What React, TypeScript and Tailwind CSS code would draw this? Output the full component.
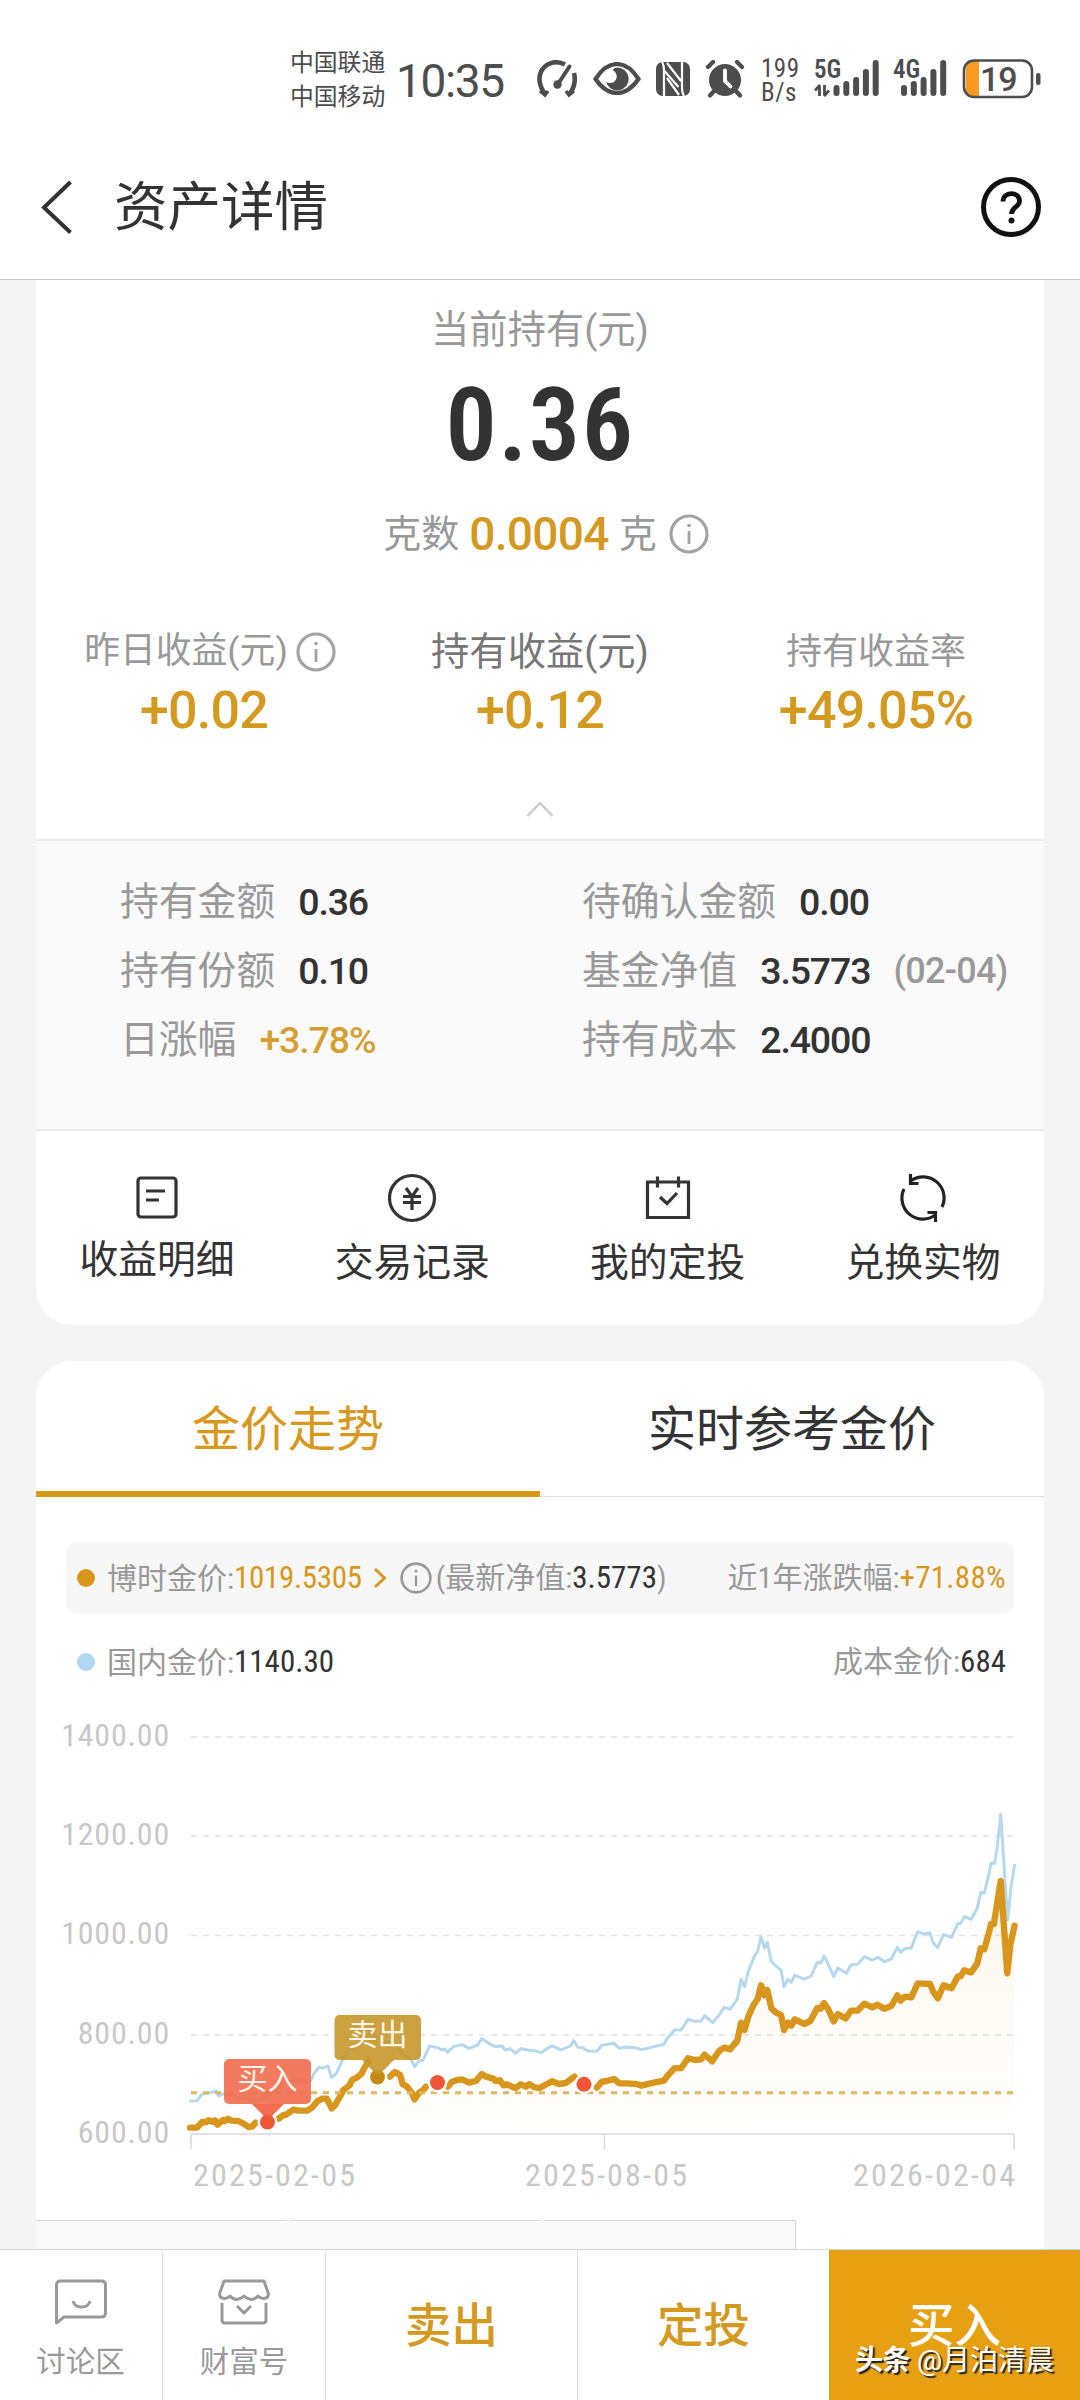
import type { ReactNode } from "react"

function InfoIcon({ className }: { className: string }) {
  return (
    <svg viewBox="0 0 40 40" className={className} fill="none" stroke="currentColor">
      <circle cx="20" cy="20" r="18" strokeWidth="3.200" />
      <path d="M20 17v13" strokeWidth="2.800" />
      <circle cx="20" cy="11.5" r="1.800" fill="currentColor" stroke="none" />
    </svg>
  )
}

const bars = [
  { y: 25, h: 11 },
  { y: 21, h: 15 },
  { y: 17, h: 19 },
  { y: 9, h: 27 },
  { y: 0, h: 36 },
]

function Signal({ label, offset, arrows }: { label: string; offset: number; arrows?: boolean }) {
  return (
    <div className="relative w-[65px] shrink-0 font-['Roboto_Condensed']">
      <div className="h-[20px] text-[25px] leading-[20px] font-semibold">{label}</div>
      <svg viewBox="0 0 65 38" className="absolute top-0 left-0 h-[38px] w-[65px]" fill="#4d4d4d">
        {arrows && (
          <path
            d="M5.500 25.500v10.500M6 25l-5 5.500M10.500 25v10.500M10 36l5-5.500"
            stroke="#4d4d4d"
            strokeWidth="2.800"
            fill="none"
          />
        )}
        {bars.map((b, i) => (
          <rect key={b.y} x={offset + i * 9.8} y={b.y} width="6" height={b.h} rx="3" />
        ))}
      </svg>
    </div>
  )
}

function StatusBar() {
  return (
    <div className="flex h-[148px] items-start pt-[45px] pl-[290px] text-[#4d4d4d]">
      <div className="w-[100px] pt-px text-[23.8px] leading-[34px]">
        <div>中国联通</div>
        <div>中国移动</div>
      </div>
      <div className="ml-[6px] w-[140px] pt-[8px] text-[46px] leading-[56px] tracking-[-0.03em]">10:35</div>
      <svg viewBox="0 0 42 38" className="mt-[15px] h-[38px] w-[42px]" fill="none" stroke="#4d4d4d" strokeWidth="4.600">
        <path d="M29 4.500C19-.5 8 3.500 4.500 13c-2.500 7-.5 13.500 4 20.500" />
        <path d="M38 13c1.800 7 .5 14-4 20.500" />
        <path d="M4 31l5 4 3-4M30 31l3 4 5-4" strokeWidth="3.500" />
        <path d="M33.500 6.500L22 24" strokeWidth="4" strokeLinecap="round" />
        <circle cx="21.500" cy="24.500" r="4.200" fill="#4d4d4d" stroke="none" />
      </svg>
      <svg viewBox="0 0 48 34" className="mt-[17px] ml-[15px] h-[34px] w-12">
        <path d="M2.500 17C9 7 16 2 24 2s15 5 21.500 15C39 26.500 32 31 24 31S9 26.500 2.500 17z" fill="none" stroke="#4d4d4d" strokeWidth="4.200" />
        <path d="M24 5.500a11.500 11.500 0 1 1-11 14c3 2.500 8 2 10-2 2-4-.5-8-3.500-9.500 1-1.600 2.500-2.500 4.500-2.500z" fill="#4d4d4d" />
      </svg>
      <svg viewBox="0 0 34 34" className="mt-[17px] ml-[15px] h-[34px] w-[34px]">
        <rect width="34" height="34" rx="6.500" fill="#4d4d4d" />
        <g fill="none" stroke="#fff" strokeWidth="2.200">
          <path d="M8 34V9q0-6-2-9M26 0v26q0 5 2 8" />
          <path d="M8.500 9l14 16M11 16l12 17M11 1l14 18" />
        </g>
      </svg>
      <svg viewBox="0 0 40 38" className="mt-[15px] ml-[15px] h-[38px] w-10" fill="none" stroke="#4d4d4d" strokeLinecap="round">
        <circle cx="20" cy="20" r="16" fill="#4d4d4d" stroke="none" />
        <path d="M3 7l5-5M37 7l-5-5M9 31l-4 4.500M31 31l4 4.500" strokeWidth="4.200" />
        <path d="M20 10.500v10.500l5.500 5.500" stroke="#fff" strokeWidth="3.800" />
      </svg>
      <div className="mt-[12px] ml-4 w-[53px] font-['Roboto_Condensed'] text-[25px] leading-[24px] tracking-[0.02em]">
        <div>199</div>
        <div>B/s</div>
      </div>
      <div className="mt-[15px] flex gap-[14px]">
        <Signal label="5G" offset={19.5} arrows />
        <Signal label="4G" offset={8} />
      </div>
      <svg viewBox="0 0 80 40" className="mt-[14px] ml-[4px] h-10 w-20">
        <path d="M4 10a8 8 0 0 1 8-8h5v36h-5a8 8 0 0 1-8-8z" fill="#fb9b20" />
        <rect x="2" y="1.500" width="68" height="36.500" rx="10" fill="none" stroke="#4d4d4d" strokeWidth="2.600" />
        <rect x="74" y="14" width="4.500" height="12" rx="2.200" fill="#4d4d4d" />
        <text x="18" y="32" fontSize="34" fontWeight="500" fontFamily="Roboto" letterSpacing="-1" fill="#4d4d4d">
          19
        </text>
      </svg>
    </div>
  )
}

function Header() {
  return (
    <div className="flex h-[132px] items-start border-b border-[#c8c8c8] pl-[38px] pr-[39px]">
      <svg viewBox="0 0 36 56" className="mt-[31px] h-14 w-9" fill="none" stroke="#333" strokeWidth="4">
        <path d="M32.500 3L6 28.500l26.500 25" />
      </svg>
      <h1 className="ml-[40px] flex-1 pt-[21px] text-[53.5px] leading-[78px] text-[#333]">资产详情</h1>
      <svg viewBox="0 0 60 60" className="mt-[29px] h-[60px] w-[60px]" fill="none" stroke="#111">
        <circle cx="30" cy="30" r="27.500" strokeWidth="5" />
        <path d="M22 24.500c0-10.500 16.500-10.500 16.500-.5 0 6-8 6-8 13" strokeWidth="4.800" />
        <circle cx="30.500" cy="43.500" r="3" fill="#111" stroke="none" />
      </svg>
    </div>
  )
}

const details: [string, string, string?][] = [
  ["持有金额", "0.36"],
  ["待确认金额", "0.00"],
  ["持有份额", "0.10"],
  ["基金净值", "3.5773", "(02-04)"],
  ["日涨幅", "+3.78%"],
  ["持有成本", "2.4000"],
]

function Earning({ label, value, className, info }: { label: string; value: string; className: string; info?: boolean }) {
  return (
    <div className="flex w-[336px] flex-col items-center">
      <div className={`flex h-[56px] items-center pt-px ${className}`}>
        {label}
        {info && <InfoIcon className="ml-[8px] h-10 w-10 text-[#a3a3a3]" />}
      </div>
      <div className="text-[52px] leading-[64px] font-medium tracking-[-0.015em] text-[#d4991f]">{value}</div>
    </div>
  )
}

function Action({ label, children, className = "" }: { label: string; children: ReactNode; className?: string }) {
  return (
    <div className={`flex w-[156px] flex-col items-center ${className}`}>
      <svg viewBox="0 0 50 50" className="h-[50px] w-[50px]" fill="none" stroke="#333" strokeWidth="3.200">
        {children}
      </svg>
      <div className="mt-[12px] text-[38.8px] leading-[56px] whitespace-nowrap text-[#333]">{label}</div>
    </div>
  )
}

function AssetCard() {
  return (
    <div className="rounded-b-[36px] bg-white">
      <div className="flex h-[559px] flex-col items-center pt-[22px]">
        <div className="text-[38.3px] leading-[56px] text-[#999]">当前持有(元)</div>
        <div className="mt-[7px] font-['Roboto_Condensed'] text-[102px] leading-[120px] font-semibold tracking-[0.015em] text-[#333]">
          0.36
        </div>
        <div className="mt-[21px] flex items-center pl-[12px] text-[38px] leading-[56px] text-[#999]">
          克数
          <span className="mx-[10px] text-[46px] font-medium tracking-[-0.015em] text-[#d4991f]">0.0004</span>
          克
          <InfoIcon className="ml-[12px] h-10 w-10 text-[#a3a3a3]" />
        </div>
        <div className="mt-[61px] flex">
          <Earning label="昨日收益(元)" value="+0.02" className="pl-[12px] text-[35.8px] text-[#999]" info />
          <Earning label="持有收益(元)" value="+0.12" className="text-[38.3px] text-[#777]" />
          <Earning label="持有收益率" value="+49.05%" className="text-[36px] text-[#999]" />
        </div>
        <svg viewBox="0 0 28 18" className="mt-[57px] h-[18px] w-7" fill="none" stroke="#ccc" strokeWidth="2.400">
          <path d="M1.500 16L14 3l12.500 13" />
        </svg>
      </div>
      <div className="grid h-[292px] grid-cols-[462px_1fr] content-start gap-y-[13px] border-t-2 border-b-2 border-[#ebebeb] bg-[#fafafa] pt-[33px] pl-[84px]">
        {details.map(([label, value, note]) => (
          <div key={label} className="flex h-[56px] items-center text-[38.8px] text-[#999]">
            {label}
            <span
              className={`ml-[23px] text-[37.5px] font-medium tracking-[-0.03em] ${
                value[0] === "+" ? "text-[#d4a030]" : "text-[#333]"
              }`}
            >
              {value}
            </span>
            {note && <span className="ml-[23px] text-[36px] font-medium tracking-[-0.02em]">{note}</span>}
          </div>
        ))}
      </div>
      <div className="flex h-[194px] justify-between px-[43px] pt-[42px]">
        <Action label="收益明细" className="-mt-[3px]">
          <rect x="6" y="8" width="38" height="39" rx="3" />
          <path d="M14 21h19M14 30h13" />
        </Action>
        <Action label="交易记录">
          <circle cx="25" cy="25" r="22.500" />
          <path d="M19 15l6 8.500 6-8.500M25 23.500V37M16 23.500h18M16 29.500h18" />
        </Action>
        <Action label="我的定投">
          <path d="M4.500 9h41v35.500h-41zM14.500 3.500v11M35.500 3.500v11M17 24l7 6.500L34 20" />
        </Action>
        <Action label="兑换实物">
          <g stroke="#222">
            <path d="M13 7.700A21 21 0 0 1 44 34M6 16A21 21 0 0 0 37 42.300" />
            <path d="M12.500 1v9.500h8M37.500 49v-9.500h-8" />
          </g>
        </Action>
      </div>
    </div>
  )
}

const goldSegments = [
  "465,1283 485,1283 500,1266 510,1267 518,1261 533,1266 537,1261 545,1274 560,1260 565,1264 575,1256 585,1262 605,1263 620,1271 635,1281 645,1280 655,1268",
  "722,1256 735,1246 745,1243 765,1229 780,1232 805,1232 820,1222 835,1203 850,1196 862,1196 876,1225 885,1217 900,1190 910,1170 918,1164 928,1156 935,1140 950,1132 962,1122 973,1100 983,1085",
  "1045,1130 1060,1116 1075,1125 1082,1152 1095,1160 1108,1178 1117,1198 1130,1178 1142,1170 1150,1160",
  "1213,1160 1225,1146 1240,1140 1255,1138 1275,1148 1295,1143 1312,1122 1325,1130 1345,1136 1352,1143 1365,1141 1375,1156 1385,1153 1400,1160 1410,1164 1425,1153 1440,1160 1450,1152 1465,1162 1480,1164 1501,1152 1516,1144 1536,1152 1556,1149 1581,1130",
  "1646,1163 1661,1145 1675,1143 1696,1137 1711,1150 1731,1150 1761,1152 1776,1157 1801,1150 1841,1142 1851,1128 1871,1105 1891,1104 1911,1075 1931,1080 1949,1078 1959,1064 1981,1084 2001,1053 2016,1043 2033,1048 2054,1022 2065,968 2075,990 2086,950 2101,915 2113,897 2123,856 2133,886 2141,870 2153,925 2166,937 2181,945 2190,990 2201,968 2211,977 2221,958 2248,972 2266,963 2286,924 2296,926 2306,909 2319,930 2334,964 2346,942 2369,955 2384,932 2403,932 2423,911 2446,922 2461,914 2481,926 2501,918 2519,886 2528,902 2541,890 2559,892 2578,850 2614,852 2623,875 2636,895 2653,856 2676,865 2694,830 2703,828 2713,811 2733,817 2751,790 2761,745 2771,748 2783,705 2791,672 2799,672 2819,543 2838,820 2846,740 2859,677",
]

const domesticLine =
  "465,1203 485,1202 500,1182 518,1180 540,1173 548,1188 565,1180 600,1192 650,1200 690,1190 720,1165 745,1143 780,1142 815,1143 825,1120 840,1102 852,1104 865,1098 876,1133 890,1120 905,1085 920,1055 940,1045 960,1040 985,1000 1010,1010 1040,1040 1060,1030 1085,1065 1105,1075 1117,1100 1130,1083 1142,1080 1160,1038 1185,1043 1195,1050 1205,1047 1213,1057 1230,1040 1255,1034 1275,1045 1300,1035 1312,1016 1340,1035 1352,1040 1370,1037 1380,1050 1395,1046 1410,1060 1425,1046 1445,1050 1465,1052 1484,1058 1501,1046 1516,1038 1543,1050 1569,1038 1579,1022 1591,1042 1606,1044 1621,1053 1646,1054 1661,1036 1696,1030 1711,1045 1731,1041 1761,1044 1776,1049 1801,1043 1841,1033 1851,1015 1871,990 1891,990 1911,958 1931,964 1949,963 1959,947 1983,968 2001,945 2016,922 2033,928 2054,897 2065,838 2075,860 2086,815 2103,770 2113,754 2123,710 2133,745 2141,727 2153,785 2166,798 2181,810 2190,860 2201,838 2211,847 2221,825 2248,838 2269,828 2286,787 2296,790 2306,768 2319,795 2334,830 2346,804 2371,820 2384,795 2403,793 2423,770 2446,780 2463,772 2481,785 2501,777 2519,742 2528,757 2541,746 2559,744 2578,695 2598,702 2613,698 2623,728 2636,743 2653,704 2676,712 2694,672 2703,670 2713,650 2733,658 2751,625 2761,577 2771,580 2783,530 2791,490 2801,490 2809,440 2819,343 2839,660 2849,560 2859,496"

const yLabels = [
  { text: "1400.00", y: 37 },
  { text: "1200.00", y: 136 },
  { text: "1000.00", y: 235.5 },
  { text: "800.00", y: 335 },
  { text: "600.00", y: 434 },
]

function Chart() {
  return (
    <svg viewBox="36 0 1008 520" className="block h-[520px] w-[1008px] font-['Roboto_Condensed','Noto_Sans_CJK_SC',sans-serif]">
      <defs>
        <linearGradient id="fade" x1="0" y1="0" x2="0" y2="1">
          <stop offset="0" stopColor="#d8961a" stopOpacity="0.09" />
          <stop offset="1" stopColor="#d8961a" stopOpacity="0" />
        </linearGradient>
      </defs>
      {yLabels.map((l) => (
        <g key={l.text}>
          <text x="170" y={l.y + 8.5} fontSize="32" fill="#c8c8c8" textAnchor="end" letterSpacing="0.800">
            {l.text}
          </text>
          {l.y < 434 && <path d={`M191 ${l.y}H1014`} stroke="#e2e2e2" strokeWidth="1.600" strokeDasharray="6 6" />}
        </g>
      ))}
      <path d="M191 449V434H1014V449M604.500 434V449" fill="none" stroke="#d9d9d9" strokeWidth="1.500" />
      <g transform="translate(30 0) scale(0.34435 0.33333)" fill="none" strokeLinejoin="round" strokeLinecap="round">
        <polygon points={`465,1303 ${goldSegments.join(" ")} 2859,1303`} fill="url(#fade)" />
        <polyline points={domesticLine} stroke="#b5d8ee" strokeWidth="3" vectorEffect="non-scaling-stroke" />
        {goldSegments.map((points) => (
          <polyline key={points} points={points} stroke="#d8971c" strokeWidth="6.400" vectorEffect="non-scaling-stroke" />
        ))}
      </g>
      <path d="M191 392.700H1014" stroke="#dcb95e" strokeWidth="3" strokeDasharray="6 6" />
      <g fill="#fff">
        <circle cx="267.500" cy="422" r="10" />
        <circle cx="377.500" cy="377" r="10" />
        <circle cx="437.500" cy="382.500" r="10" />
        <circle cx="584" cy="384.300" r="10" />
      </g>
      <g fill="#f05535">
        <circle cx="267.500" cy="422" r="7.500" />
        <circle cx="437.500" cy="382.500" r="7.500" />
        <circle cx="584" cy="384.300" r="7.500" />
      </g>
      <circle cx="377.500" cy="377" r="7.500" fill="#c48c12" />
      <g fillOpacity="0.9">
        <rect x="224" y="359" width="87" height="45" rx="5" fill="#f26a4e" />
        <path d="M252 404h32l-14 14h-4z" fill="#f05c3d" />
        <rect x="334.500" y="315" width="86.500" height="45" rx="5" fill="#c6972a" />
        <path d="M362 360h32l-14 14h-4z" fill="#c6972a" />
      </g>
      <g fontSize="30" fill="#fff6ea" textAnchor="middle">
        <text x="267.500" y="388.500">买入</text>
        <text x="377.500" y="344.500">卖出</text>
      </g>
      <g fontSize="32" fill="#c8c8c8">
        <text x="193" y="486" textLength="162">2025-02-05</text>
        <text x="525" y="486" textLength="162">2025-08-05</text>
        <text x="853" y="486" textLength="162">2026-02-04</text>
      </g>
    </svg>
  )
}

function TrendCard() {
  return (
    <div className="mt-[36px] h-[888px] overflow-hidden rounded-t-[36px] bg-white">
      <div className="flex h-[136px] text-[48px] leading-[137px]">
        <div className="h-[136px] w-[504px] border-b-[6px] border-[#d8981c] text-center text-[#d8981c]">金价走势</div>
        <div className="flex-1 border-b border-[#dcdcdc] text-center text-[#333]">实时参考金价</div>
      </div>
      <div className="mx-[30px] mt-[45px] flex h-[72px] items-center rounded-[10px] bg-[#f7f7f7] pr-[8px] pl-[11px] font-['Roboto_Condensed','Noto_Sans_CJK_SC',sans-serif] text-[30px] whitespace-nowrap text-[#999]">
        <span className="mr-[12px] h-[18px] w-[18px] rounded-full bg-[#d8961a]" />
        博时金价:<span className="text-[31px] tracking-[-0.01em] text-[#d8981c]">1019.5305</span>
        <svg viewBox="0 0 14 22" className="ml-[11px] h-[22px] w-[14px]" fill="none" stroke="#d8981c" strokeWidth="3">
          <path d="M2 2l9.500 9L2 20" />
        </svg>
        <InfoIcon className="ml-[13px] h-8 w-8 text-[#999]" />
        <span className="ml-[4px]">
          (最新净值:<span className="text-[31px] text-[#333]">3.5773</span>)
        </span>
        <span className="ml-auto">
          近1年涨跌幅:<span className="text-[31px] tracking-[0.01em] text-[#d8981c]">+71.88%</span>
        </span>
      </div>
      <div className="mx-[30px] mt-[12px] flex h-[72px] items-center pr-[8px] pl-[11px] font-['Roboto_Condensed','Noto_Sans_CJK_SC',sans-serif] text-[30px] text-[#999]">
        <span className="mr-[12px] h-[18px] w-[18px] rounded-full bg-[#b0d8f0]" />
        国内金价:<span className="text-[31px] text-[#333]">1140.30</span>
        <span className="ml-auto">
          成本金价:<span className="text-[31px] text-[#333]">684</span>
        </span>
      </div>
      <div className="mt-[2px]">
        <Chart />
      </div>
      <div className="flex h-[30px] w-[760px] gap-[3px] border-r border-[#d8d8d8] bg-[#fafafa]">
        <div className="flex-1 border-t border-[#d8d8d8]" />
        <div className="flex-1 border-t border-[#d8d8d8]" />
        <div className="flex-1 border-t border-[#d8d8d8]" />
      </div>
    </div>
  )
}

function BottomBar() {
  return (
    <div className="flex h-[151px] border-t border-[#d5d5d5] bg-white text-[46.5px] font-medium text-[#d4991f]">
      <div className="flex w-[163px] flex-col items-center border-r border-[#dcdcdc] pt-[28px] pr-px text-[29.5px] font-normal text-[#999]">
        <svg viewBox="0 0 54 48" className="h-12 w-[54px]" fill="none" stroke="#999" strokeWidth="3" strokeLinejoin="round">
          <path d="M2.500 45V7q0-4 4-4h41q4 0 4 4v28q0 4-4 4H10z" />
          <path d="M19 23c2 8 15 8 17 0" />
        </svg>
        <div className="mt-[14px] leading-[44px]">讨论区</div>
      </div>
      <div className="flex w-[163px] flex-col items-center border-r border-[#dcdcdc] pt-[28px] text-[29.5px] font-normal text-[#999]">
        <svg viewBox="0 0 54 48" className="h-12 w-[54px]" fill="none" stroke="#999" strokeWidth="3" strokeLinejoin="round">
          <path d="M7 3h40l4.500 13c0 5-7 6-10.500 2-4 4.500-9 4.500-14 0-5 4.500-10 4.500-14 0-3.500 4-10.500 3-10.500-2z" />
          <path d="M5 25v17q0 3 3 3h38q3 0 3-3V25M20 28l7 7 7-7" />
        </svg>
        <div className="mt-[14px] leading-[44px]">财富号</div>
      </div>
      <div className="w-[252px] border-r border-[#dcdcdc] text-center leading-[152px]">卖出</div>
      <div className="w-[251px] text-center leading-[152px]">定投</div>
      <div className="relative flex-1 bg-[#e6a011] text-center leading-[152px] text-white">
        买入
        <div className="absolute top-[93px] left-[26px] flex gap-[7px] text-[28px] leading-[36px] whitespace-nowrap [text-shadow:2px_2px_1px_#222]">
          <span className="font-bold tracking-[-0.02em]">头条</span>
          <span className="font-normal">@月泊清晨</span>
        </div>
      </div>
    </div>
  )
}

export default function App() {
  return (
    <div className="h-[2400px] w-[1080px] overflow-hidden bg-white font-['Roboto','Noto_Sans_CJK_SC',sans-serif]">
      <StatusBar />
      <Header />
      <main className="h-[1969px] overflow-hidden bg-[#f4f4f4] px-[36px]">
        <AssetCard />
        <TrendCard />
      </main>
      <BottomBar />
    </div>
  )
}
